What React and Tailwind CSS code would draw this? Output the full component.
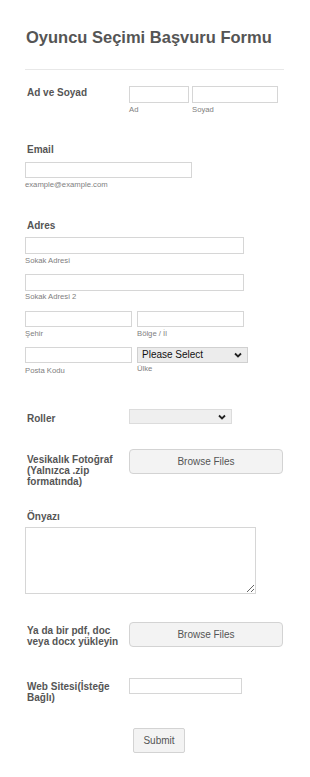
import React from "react";

function Chevron() {
  return (
    <svg width="8" height="6" viewBox="0 0 8 6" className="shrink-0">
      <path d="M1 1.5 L4 4.5 L7 1.5" fill="none" stroke="#222" strokeWidth="1.8" />
    </svg>
  );
}

function SubLabel({ children, className = "" }) {
  return (
    <div className={"text-[7.7px] leading-[9px] text-[#808080] " + className}>
      {children}
    </div>
  );
}

function FakeSelect({ value, className = "" }) {
  return (
    <div
      className={
        "flex items-center justify-between pl-[4px] pr-[5px] border border-[#d0d0d0] bg-[#ececec] text-[10px] leading-[12px] text-[#111] " +
        className
      }
    >
      <span>{value}</span>
      <Chevron />
    </div>
  );
}

const inputCls = "block border border-[#d6d6d6] bg-white outline-none";
const sideLabel =
  "w-[104px] shrink-0 pl-[2px] text-[10px] leading-[11px] font-bold";
const browseBtn =
  "w-[154px] h-[25px] rounded-[4px] border border-[#d3d3d3] bg-[#f3f3f3] text-[10px] text-[#555]";

function App() {
  return (
    <div className="min-h-screen bg-white font-['Liberation_Sans',Arial,sans-serif] text-[#555]">
      <div className="px-[25px] pt-[26px] pb-[25px] w-[310px]">
        {/* Header */}
        <h1 className="text-[16.5px] leading-[22px] font-bold text-[#555] pl-[1px]">
          Oyuncu Seçimi Başvuru Formu
        </h1>
        <div className="mt-[21px] h-px w-[259px] bg-[#e8e8e8]" />

        {/* Ad ve Soyad */}
        <div className="mt-[16px] flex items-start">
          <label className={sideLabel + " w-[103px] pt-[1px]"}>Ad ve Soyad</label>
          <div className="flex gap-[3px]">
            <div>
              <input className={inputCls + " w-[60px] h-[17px]"} />
              <SubLabel className="mt-[2px]">Ad</SubLabel>
            </div>
            <div>
              <input className={inputCls + " w-[86px] h-[17px]"} />
              <SubLabel className="mt-[2px]">Soyad</SubLabel>
            </div>
          </div>
        </div>

        {/* Email */}
        <label className="mt-[30px] block pl-[2px] text-[10px] leading-[11px] font-bold">
          Email
        </label>
        <input className={inputCls + " mt-[7px] w-[167px] h-[16px]"} />
        <SubLabel className="mt-[2px]">example@example.com</SubLabel>

        {/* Adres */}
        <label className="mt-[31px] block pl-[2px] text-[10px] leading-[11px] font-bold">
          Adres
        </label>
        <input className={inputCls + " mt-[6px] w-[219px] h-[17px]"} />
        <SubLabel className="mt-[2px]">Sokak Adresi</SubLabel>
        <input className={inputCls + " mt-[9px] w-[219px] h-[17px]"} />
        <SubLabel className="mt-[1px]">Sokak Adresi 2</SubLabel>

        <div className="mt-[10px] flex gap-[5px]">
          <div>
            <input className={inputCls + " w-[107px] h-[16px]"} />
            <SubLabel className="mt-[2px]">Şehir</SubLabel>
          </div>
          <div>
            <input className={inputCls + " w-[107px] h-[16px]"} />
            <SubLabel className="mt-[2px]">Bölge / İl</SubLabel>
          </div>
        </div>

        <div className="mt-[9px] flex gap-[5px] items-start">
          <div>
            <input className={inputCls + " w-[107px] h-[16px]"} />
            <SubLabel className="mt-[3px]">Posta Kodu</SubLabel>
          </div>
          <div>
            <FakeSelect value="Please Select" className="w-[111px] h-[16px]" />
            <SubLabel className="mt-[1px]">Ülke</SubLabel>
          </div>
        </div>

        {/* Roller */}
        <div className="mt-[34px] flex items-start">
          <label className={sideLabel + " pt-[4px]"}>Roller</label>
          <FakeSelect value="" className="w-[103px] h-[15px] border-[#dcdcdc] bg-[#efefef]" />
        </div>

        {/* Vesikalık */}
        <div className="mt-[25px] flex items-start">
          <label className={sideLabel + " pt-[5px] pr-[8px]"}>
            Vesikalık Fotoğraf (Yalnızca .zip formatında)
          </label>
          <button className={browseBtn}>Browse Files</button>
        </div>

        {/* Önyazı */}
        <label className="mt-[24px] block pl-[2px] text-[10px] leading-[11px] font-bold">
          Önyazı
        </label>
        <textarea className="mt-[5px] block w-[231px] h-[67px] border border-[#d6d6d6] bg-white outline-none" />

        {/* Ya da */}
        <div className="mt-[28px] flex items-start">
          <label className={sideLabel + " pt-[3px] pr-[6px]"}>
            Ya da bir pdf, doc veya docx yükleyin
          </label>
          <button className={browseBtn}>Browse Files</button>
        </div>

        {/* Web Sitesi */}
        <div className="mt-[31px] flex items-start">
          <label className={sideLabel + " pt-[3px] pr-[8px]"}>
            Web Sitesi(İsteğe Bağlı)
          </label>
          <input className={inputCls + " w-[113px] h-[16px]"} />
        </div>

        {/* Submit */}
        <button className="mt-[25px] ml-[108px] block w-[52px] h-[25px] rounded-[2px] border border-[#d3d3d3] bg-[#f3f3f3] text-[10px] text-[#555]">
          Submit
        </button>
      </div>
    </div>
  );
}

export default App;
